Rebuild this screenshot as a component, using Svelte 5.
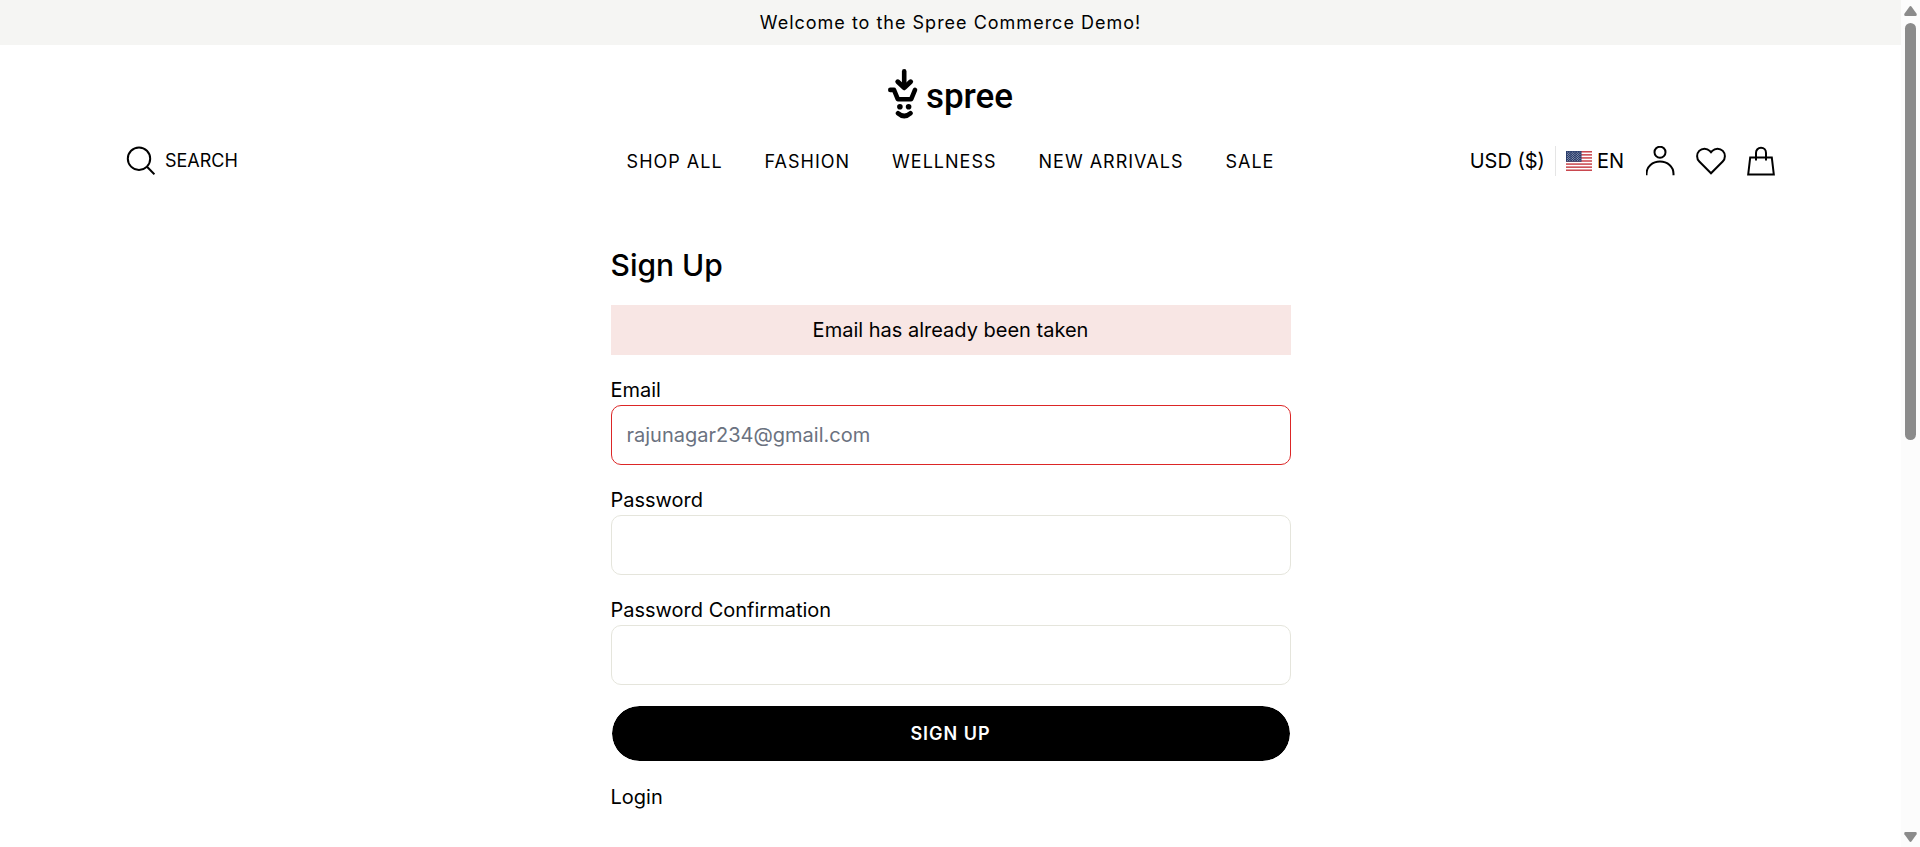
<script>
  const links = ['Shop All', 'Fashion', 'Wellness', 'New Arrivals', 'Sale'];
  const stripes = [0, 2, 4, 6, 8, 10, 12];
  const stars = [];
  for (let row = 0; row < 9; row++) {
    for (let col = 0; col < (row % 2 ? 5 : 6); col++) {
      stars.push({ x: 1.4 + col * 2.6 + (row % 2 ? 1.3 : 0), y: 1.1 + row * 1.07 });
    }
  }
  let email = $state('rajunagar234@gmail.com');
  let password = $state('');
  let confirmation = $state('');
</script>

<div class="shell">
  <div class="page">
    <p class="announcement">Welcome to the Spree Commerce Demo!</p>

    <header>
      <a class="logo" href="#home">
        <svg width="30" height="50" viewBox="0 0 30 50" fill="none" stroke="#000" stroke-linecap="round" stroke-linejoin="round" aria-hidden="true">
          <path d="M16.2 2.4V18" stroke-width="4.6" />
          <path d="M9.8 12.8L16.2 18.8L22.6 12.8" stroke-width="5" />
          <path d="M2.3 20.9H6L9.8 30.2H23.2L27 20.9" stroke-width="4.6" />
          <circle cx="11.9" cy="37.8" r="2.8" fill="#000" stroke="none" />
          <circle cx="20.6" cy="37.8" r="2.8" fill="#000" stroke="none" />
          <path d="M10 44.2Q16.2 49.8 22.500 44.2" stroke-width="4.6" />
        </svg>
        <span>spree</span>
      </a>

      <div class="bar">
        <button class="search" type="button">
          <svg width="30" height="30" viewBox="0 0 30 30" fill="none" stroke="#000" stroke-width="2" aria-hidden="true">
            <circle cx="14" cy="12.7" r="11.2" />
            <path d="M22 20.8L29.4 28.4" />
          </svg>
          Search
        </button>

        <nav>
          {#each links as link}
            <a href="#{link}">{link}</a>
          {/each}
        </nav>

        <div class="tools">
          <button class="currency" type="button">USD ($)</button>
          <button class="locale" type="button">
            <svg width="26" height="20" viewBox="0 0 26 20" aria-hidden="true">
              <rect width="26" height="20" fill="#fff" />
              {#each stripes as s}
                <rect y={(s * 20) / 13} width="26" height={20 / 13} fill="#c9484f" />
              {/each}
              <rect width="15.5" height="10.77" fill="#2a3d6c" />
              {#each stars as star}
                <circle cx={star.x * 0.97} cy={star.y} r="0.42" fill="#fff" />
              {/each}
            </svg>
            EN
          </button>
          <a class="icon" href="#account" aria-label="Account">
            <svg width="30" height="30" viewBox="0 0 30 30" fill="none" stroke="#000" stroke-width="2" aria-hidden="true">
              <circle cx="14" cy="6.2" r="5.5" />
              <path d="M0.500 29.2V27.8C0.500 20.8 6.500 15.6 14 15.6S27.500 20.8 27.500 27.8V29.2" />
            </svg>
          </a>
          <a class="icon" href="#wishlist" aria-label="Wishlist">
            <svg width="30" height="30" viewBox="0 0 30 30" fill="none" stroke="#000" stroke-width="2" aria-hidden="true">
              <path d="M15 27.3L3.3 15.5C0.4 12.5 0.4 7.8 3.2 4.9C6.1 1.9 10.9 1.9 13.7 4.9L15 6.3L16.3 4.9C19.1 1.9 23.9 1.9 26.8 4.9C29.6 7.8 29.6 12.5 26.7 15.5Z" />
            </svg>
          </a>
          <a class="icon" href="#cart" aria-label="Cart">
            <svg width="30" height="30" viewBox="0 0 30 30" fill="none" stroke="#000" stroke-width="2" aria-hidden="true">
              <path d="M4.2 11.5H25.8L27.8 28.5H2.2Z" />
              <path d="M10 14.5V7C10 4 12 1.8 15 1.8S20 4 20 7V14.5" />
            </svg>
          </a>
        </div>
      </div>
    </header>

    <main>
      <h1>Sign Up</h1>
      <p class="alert" role="alert">Email has already been taken</p>
      <form>
        <div class="field">
          <label for="email">Email</label>
          <input class="invalid" id="email" type="email" bind:value={email} />
        </div>
        <div class="field">
          <label for="password">Password</label>
          <input id="password" type="password" bind:value={password} />
        </div>
        <div class="field">
          <label for="confirmation">Password Confirmation</label>
          <input id="confirmation" type="password" bind:value={confirmation} />
        </div>
        <button class="submit" type="submit">Sign Up</button>
      </form>
      <a class="login" href="#login">Login</a>
    </main>
  </div>

  <div class="scrollbar" aria-hidden="true">
    <svg width="13" height="10" viewBox="0 0 13 10" fill="#8b8b8b"><path d="M5.4 0.7Q6.5 -0.5 7.6 0.7L12.6 7.8Q13.2 10 11.5 10H1.5Q-0.2 10 0.4 7.8Z" /></svg>
    <div class="track"><div class="thumb"></div></div>
    <svg width="13" height="10" viewBox="0 0 13 10" fill="#8b8b8b"><path d="M5.4 9.3Q6.5 10.5 7.6 9.3L12.6 2.2Q13.2 0 11.5 0H1.5Q-0.2 0 0.4 2.2Z" /></svg>
  </div>
</div>

<style>
  :global(body) {
    margin: 0;
    background: #fff;
  }

  .shell {
    display: flex;
    min-height: 100vh;
    font: 20px/30px Inter, sans-serif;
    color: #000;
  }

  .page {
    flex: 1;
    min-width: 0;
  }

  a {
    color: inherit;
    text-decoration: none;
  }

  button {
    padding: 0;
    border: 0;
    background: none;
    color: inherit;
    font: inherit;
    cursor: pointer;
  }

  svg {
    display: block;
    flex: none;
  }

  .announcement {
    margin: 0;
    padding: 10px 20px;
    background: #f5f5f3;
    font-size: 18px;
    line-height: 25px;
    letter-spacing: 1px;
    text-align: center;
  }

  header {
    padding: 24px 125px 0;
  }

  .logo {
    display: flex;
    justify-content: center;
    align-items: flex-end;
    gap: 8px;
    width: max-content;
    margin: 0 auto;
  }

  .logo span {
    font: 500 35px/44px Roboto, sans-serif;
  }

  .bar {
    display: grid;
    grid-template-columns: 1fr auto 1fr;
    align-items: center;
    margin-top: 20px;
    height: 44px;
  }

  .search {
    display: flex;
    align-items: center;
    gap: 10px;
    width: max-content;
    font-size: 18px;
    text-transform: uppercase;
  }

  nav {
    display: flex;
    gap: 42px;
    padding-top: 2px;
    font-size: 18px;
    letter-spacing: 1px;
    text-transform: uppercase;
  }

  .tools {
    display: flex;
    justify-content: flex-end;
    align-items: center;
    gap: 20px;
  }

  .currency {
    padding-right: 10px;
    border-right: 1px solid #e5e5e5;
  }

  .locale {
    display: flex;
    align-items: center;
    gap: 5px;
    margin-left: -10px;
    padding-right: 2px;
  }

  main {
    max-width: 680px;
    margin: 0 auto;
    padding: 62px 20px 30px;
  }

  h1 {
    margin: 0 0 20px;
    font-size: 30px;
    font-weight: 500;
    line-height: 40px;
  }

  .alert {
    margin: 0 0 20px;
    padding: 10px;
    background: #f8e6e4;
    text-align: center;
  }

  form {
    display: flex;
    flex-direction: column;
    gap: 20px;
  }

  .field {
    display: flex;
    flex-direction: column;
  }

  input {
    box-sizing: border-box;
    width: 100%;
    height: 60px;
    padding: 0 15px;
    border: 1px solid #e5e5dc;
    border-radius: 10px;
    outline: 0;
    background: #fff;
    color: #6b7280;
    font: inherit;
  }

  .invalid {
    border-color: #dc2626;
  }

  .submit {
    height: 57px;
    border: 1px solid #fff;
    border-radius: 30px;
    background: #000;
    background-clip: padding-box;
    color: #fff;
    font-size: 18px;
    font-weight: 600;
    letter-spacing: 1px;
    text-transform: uppercase;
  }

  .login {
    display: block;
    width: max-content;
    margin-top: 20px;
  }

  .scrollbar {
    position: sticky;
    top: 0;
    box-sizing: border-box;
    display: flex;
    flex-direction: column;
    align-items: center;
    gap: 7px;
    width: 19px;
    height: 100vh;
    padding: 6px 0 5px;
    background: #fcfcfc;
  }

  .track {
    flex: 1;
  }

  .thumb {
    width: 11px;
    height: 52%;
    border-radius: 6px;
    background: #8b8b8b;
  }
</style>
